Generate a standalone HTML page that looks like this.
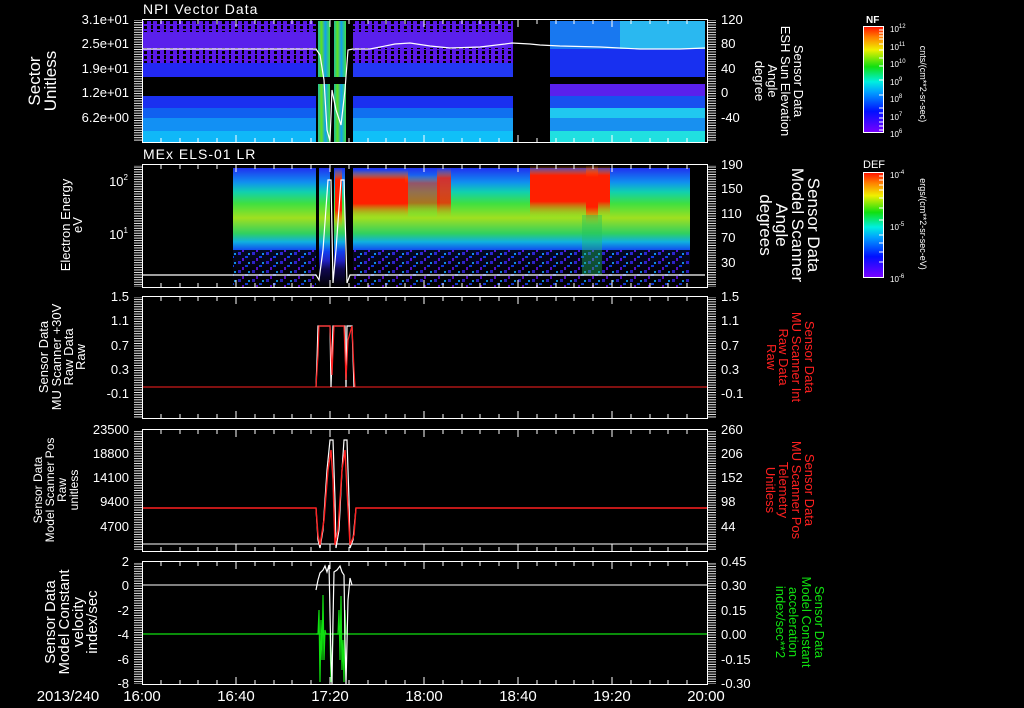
<!DOCTYPE html>
<html><head><meta charset="utf-8"><style>
html,body{margin:0;padding:0;background:#000;width:1024px;height:708px;overflow:hidden}
svg{display:block}
text{font-family:"Liberation Sans",sans-serif;fill:#fff}
</style></head><body>
<svg width="1024" height="708" viewBox="0 0 1024 708" xmlns="http://www.w3.org/2000/svg">
<defs>
<linearGradient id="rb" x1="0" y1="1" x2="0" y2="0">
<stop offset="0" stop-color="#7a00ff"/><stop offset="0.2" stop-color="#0010ff"/><stop offset="0.38" stop-color="#00a0ff"/><stop offset="0.48" stop-color="#00f0e0"/><stop offset="0.62" stop-color="#10e010"/><stop offset="0.78" stop-color="#f0f000"/><stop offset="0.9" stop-color="#ff8000"/><stop offset="1" stop-color="#ff1000"/>
</linearGradient>
<linearGradient id="sp2" x1="0" y1="0" x2="0" y2="1">
<stop offset="0" stop-color="#2030f0"/><stop offset="0.12" stop-color="#1090f0"/><stop offset="0.2" stop-color="#10d0b0"/><stop offset="0.3" stop-color="#40e040"/><stop offset="0.42" stop-color="#a0e020"/><stop offset="0.55" stop-color="#30d060"/><stop offset="0.62" stop-color="#10b0e0"/><stop offset="0.7" stop-color="#1040f0"/><stop offset="0.78" stop-color="#2020c0"/><stop offset="0.85" stop-color="#100850"/><stop offset="1" stop-color="#000"/>
</linearGradient>
<linearGradient id="red1" x1="0" y1="0" x2="0" y2="1">
<stop offset="0" stop-color="#ff8000" stop-opacity="0"/><stop offset="0.2" stop-color="#ff2000"/><stop offset="0.7" stop-color="#ff2000"/><stop offset="1" stop-color="#f0c000" stop-opacity="0"/>
</linearGradient>
<linearGradient id="stripe" x1="0" y1="0" x2="1" y2="0">
<stop offset="0" stop-color="#20c0a0"/><stop offset="0.3" stop-color="#60e020"/><stop offset="0.6" stop-color="#10a0f0"/><stop offset="1" stop-color="#40e040"/>
</linearGradient>
<pattern id="noise" width="14" height="9" patternUnits="userSpaceOnUse">
<rect width="14" height="9" fill="#000"/><rect x="0" y="0" width="3" height="3" fill="#3020d0"/><rect x="7" y="4" width="3" height="2" fill="#1040f0"/><rect x="4" y="6" width="2" height="3" fill="#6010e0"/><rect x="10" y="1" width="2" height="2" fill="#10a0f0"/>
</pattern>
<pattern id="speck" width="13" height="5" patternUnits="userSpaceOnUse">
<rect width="13" height="5" fill="#5a18e8"/><rect x="1" y="1" width="3" height="3" fill="#000"/><rect x="8" y="0" width="2" height="4" fill="#000"/>
</pattern>
<pattern id="vcomb" width="4" height="2.45" patternUnits="userSpaceOnUse"><rect width="4" height="0.9" fill="#fff"/></pattern>
</defs>

<!-- ===== Panel 1 ===== -->
<g>
<rect x="142" y="21" width="174" height="11" fill="url(#speck)"/>
<rect x="142" y="32" width="174" height="16" fill="#5a20ec"/>
<rect x="142" y="48" width="174" height="15" fill="url(#speck)"/>
<rect x="142" y="63" width="174" height="14" fill="#2228f2"/>
<rect x="142" y="96" width="174" height="12" fill="#1a30f0"/>
<rect x="142" y="108" width="174" height="10" fill="#1060f0"/>
<rect x="142" y="118" width="174" height="13" fill="#1290f4"/>
<rect x="142" y="131" width="174" height="11" fill="#10b8f8"/>

<rect x="353" y="21" width="160" height="11" fill="url(#speck)"/>
<rect x="353" y="32" width="160" height="16" fill="#5a20ec"/>
<rect x="353" y="48" width="160" height="15" fill="url(#speck)"/>
<rect x="353" y="63" width="160" height="14" fill="#2238f2"/>
<rect x="353" y="96" width="160" height="12" fill="#1a30f0"/>
<rect x="353" y="108" width="160" height="10" fill="#1070f0"/>
<rect x="353" y="118" width="160" height="13" fill="#18a0f4"/>
<rect x="353" y="131" width="160" height="11" fill="#10c0f8"/>

<rect x="550" y="21" width="155" height="28" fill="#1878f0"/>
<rect x="620" y="21" width="85" height="28" fill="#30c8f0" opacity="0.8"/>
<rect x="550" y="49" width="155" height="28" fill="#1830f0"/>
<rect x="550" y="84" width="155" height="12" fill="#5a20ec"/>
<rect x="550" y="96" width="155" height="12" fill="#1850f0"/>
<rect x="550" y="108" width="155" height="10" fill="#20c8f0"/>
<rect x="550" y="118" width="155" height="13" fill="#1890f0"/>
<rect x="550" y="131" width="155" height="11" fill="#20e0e0"/>

<rect x="318" y="21" width="12" height="56" fill="url(#stripe)"/>
<rect x="334" y="21" width="12" height="56" fill="url(#stripe)"/>
<rect x="318" y="84" width="12" height="58" fill="url(#stripe)"/>
<rect x="334" y="84" width="12" height="58" fill="url(#stripe)"/>
<polyline fill="none" stroke="#fff" stroke-width="1.2" points="142,49 316,49 320,55 324,80 327,130 330,141 332,90 336,110 341,125 345,90 348,50 353,49 370,49 395,44 410,43 430,46 450,48 480,47 505,44 512,43 530,44 540,45 560,46 600,47 640,49 680,49 705,48"/>
</g>

<!-- ===== Panel 2 ===== -->
<g>
<rect x="233" y="168" width="83" height="119" fill="url(#sp2)"/>
<rect x="353" y="168" width="337" height="119" fill="url(#sp2)"/>
<rect x="233" y="250" width="83" height="37" fill="url(#noise)" opacity="0.85"/>
<rect x="353" y="250" width="337" height="37" fill="url(#noise)" opacity="0.85"/>
<rect x="319" y="168" width="11" height="119" fill="url(#sp2)"/>
<rect x="334" y="168" width="11" height="119" fill="url(#sp2)"/>
<rect x="335" y="168" width="7" height="60" fill="url(#red1)"/>
<rect x="353" y="170" width="55" height="48" fill="url(#red1)"/>
<rect x="405" y="175" width="35" height="40" fill="url(#red1)" opacity="0.55"/>
<rect x="437" y="168" width="14" height="50" fill="url(#red1)" opacity="0.8"/>
<rect x="530" y="165" width="80" height="52" fill="url(#red1)"/>
<rect x="586" y="165" width="12" height="60" fill="url(#red1)"/>
<rect x="582" y="215" width="20" height="60" fill="#20c060" opacity="0.4"/>
<polyline fill="none" stroke="#fff" stroke-width="1.2" points="142,275 316,275 319,280 323,250 328,180 331,180 333,283 336,250 341,180 344,180 347,283 350,275 705,275"/>
</g>

<!-- ===== Panel 3 ===== -->
<line x1="142" y1="387" x2="708" y2="387" stroke="#ff2020" stroke-width="1"/>
<polyline fill="none" stroke="#fff" stroke-width="1.2" points="316,387 317,360 318,326 330,326 331,387 333,326 345,326 346,387 347,326 352,326 354,387"/>
<polyline fill="none" stroke="#ff2020" stroke-width="1.2" points="316,387 318,355 319,326 330,326 332,375 334,326 344,326 346,380 348,340 352,326 354,370 355,387"/>

<!-- ===== Panel 4 ===== -->
<line x1="142" y1="544" x2="708" y2="544" stroke="#fff" stroke-width="1"/>
<polyline fill="none" stroke="#fff" stroke-width="1.2" points="316,508 318,540 320,548 323,530 327,470 330,440 333,440 335,500 336,548 339,530 342,470 344,440 347,440 349,500 350,548 353,540 356,508"/>
<polyline fill="none" stroke="#ff2020" stroke-width="1.4" points="142,508 316,508 318,535 320,545 324,520 328,470 331,450 333,480 335,545 338,530 342,470 345,450 347,490 350,545 354,535 356,508 708,508"/>

<!-- ===== Panel 5 ===== -->
<line x1="142" y1="585" x2="708" y2="585" stroke="#fff" stroke-width="1"/>
<line x1="142" y1="634" x2="708" y2="634" stroke="#10e010" stroke-width="1.2"/>
<polyline fill="none" stroke="#10e010" stroke-width="1.2" points="316,634 318,634 319,610 320,682 321,620 322,660 323,595 324,660 325,630 326,634 330,634 331,682 333,634 338,634 339,610 340,660 341,596 342,670 343,640 344,682 345,610 346,634 350,634"/>
<polyline fill="none" stroke="#fff" stroke-width="1.2" points="316,590 318,580 320,573 323,570 325,566 327,572 329,565 331,660 332,684 333,620 334,572 337,570 340,566 342,572 344,575 345,640 346,684 348,600 350,578 352,585"/>

<!-- ===== Axes frames, ticks ===== -->
<g stroke="#fff" stroke-width="1" fill="none">
<rect x="142.5" y="19.5" width="565" height="123"/>
<rect x="142.5" y="164.5" width="565" height="123"/>
<rect x="142.5" y="296.5" width="565" height="122"/>
<rect x="142.5" y="429.5" width="565" height="122"/>
<rect x="142.5" y="561.5" width="565" height="123"/>
</g>
<g>
<rect x="134" y="20" width="8" height="122" fill="url(#vcomb)"/>
<rect x="708" y="20" width="8" height="122" fill="url(#vcomb)"/>
<rect x="134" y="165" width="8" height="122" fill="url(#vcomb)"/>
<rect x="708" y="165" width="8" height="122" fill="url(#vcomb)"/>
<rect x="134" y="297" width="8" height="121" fill="url(#vcomb)"/>
<rect x="708" y="297" width="8" height="121" fill="url(#vcomb)"/>
<rect x="134" y="430" width="8" height="121" fill="url(#vcomb)"/>
<rect x="708" y="430" width="8" height="121" fill="url(#vcomb)"/>
<rect x="134" y="562" width="8" height="122" fill="url(#vcomb)"/>
<rect x="708" y="562" width="8" height="122" fill="url(#vcomb)"/>
</g>
<g stroke="#fff" stroke-width="1">
<path d="M161 20v4M180 20v4M198 20v4M217 20v4M236 20v7M255 20v4M274 20v4M292 20v4M311 20v4M330 20v7M349 20v4M368 20v4M386 20v4M405 20v4M424 20v7M443 20v4M462 20v4M480 20v4M499 20v4M518 20v7M537 20v4M556 20v4M574 20v4M593 20v4M612 20v7M631 20v4M650 20v4M668 20v4M687 20v4"/>
<path d="M161 142v-4M180 142v-4M198 142v-4M217 142v-4M236 142v-7M255 142v-4M274 142v-4M292 142v-4M311 142v-4M330 142v-7M349 142v-4M368 142v-4M386 142v-4M405 142v-4M424 142v-7M443 142v-4M462 142v-4M480 142v-4M499 142v-4M518 142v-7M537 142v-4M556 142v-4M574 142v-4M593 142v-4M612 142v-7M631 142v-4M650 142v-4M668 142v-4M687 142v-4"/>
<g transform="translate(0,145)"><path d="M161 20v4M180 20v4M198 20v4M217 20v4M236 20v7M255 20v4M274 20v4M292 20v4M311 20v4M330 20v7M349 20v4M368 20v4M386 20v4M405 20v4M424 20v7M443 20v4M462 20v4M480 20v4M499 20v4M518 20v7M537 20v4M556 20v4M574 20v4M593 20v4M612 20v7M631 20v4M650 20v4M668 20v4M687 20v4"/>
<path d="M161 142v-4M180 142v-4M198 142v-4M217 142v-4M236 142v-7M255 142v-4M274 142v-4M292 142v-4M311 142v-4M330 142v-7M349 142v-4M368 142v-4M386 142v-4M405 142v-4M424 142v-7M443 142v-4M462 142v-4M480 142v-4M499 142v-4M518 142v-7M537 142v-4M556 142v-4M574 142v-4M593 142v-4M612 142v-7M631 142v-4M650 142v-4M668 142v-4M687 142v-4"/></g>
<g transform="translate(0,277)"><path d="M161 20v4M180 20v4M198 20v4M217 20v4M236 20v7M255 20v4M274 20v4M292 20v4M311 20v4M330 20v7M349 20v4M368 20v4M386 20v4M405 20v4M424 20v7M443 20v4M462 20v4M480 20v4M499 20v4M518 20v7M537 20v4M556 20v4M574 20v4M593 20v4M612 20v7M631 20v4M650 20v4M668 20v4M687 20v4"/>
<path d="M161 141v-4M180 141v-4M198 141v-4M217 141v-4M236 141v-7M255 141v-4M274 141v-4M292 141v-4M311 141v-4M330 141v-7M349 141v-4M368 141v-4M386 141v-4M405 141v-4M424 141v-7M443 141v-4M462 141v-4M480 141v-4M499 141v-4M518 141v-7M537 141v-4M556 141v-4M574 141v-4M593 141v-4M612 141v-7M631 141v-4M650 141v-4M668 141v-4M687 141v-4"/></g>
<g transform="translate(0,410)"><path d="M161 20v4M180 20v4M198 20v4M217 20v4M236 20v7M255 20v4M274 20v4M292 20v4M311 20v4M330 20v7M349 20v4M368 20v4M386 20v4M405 20v4M424 20v7M443 20v4M462 20v4M480 20v4M499 20v4M518 20v7M537 20v4M556 20v4M574 20v4M593 20v4M612 20v7M631 20v4M650 20v4M668 20v4M687 20v4"/>
<path d="M161 141v-4M180 141v-4M198 141v-4M217 141v-4M236 141v-7M255 141v-4M274 141v-4M292 141v-4M311 141v-4M330 141v-7M349 141v-4M368 141v-4M386 141v-4M405 141v-4M424 141v-7M443 141v-4M462 141v-4M480 141v-4M499 141v-4M518 141v-7M537 141v-4M556 141v-4M574 141v-4M593 141v-4M612 141v-7M631 141v-4M650 141v-4M668 141v-4M687 141v-4"/></g>
<g transform="translate(0,542)"><path d="M161 20v4M180 20v4M198 20v4M217 20v4M236 20v7M255 20v4M274 20v4M292 20v4M311 20v4M330 20v7M349 20v4M368 20v4M386 20v4M405 20v4M424 20v7M443 20v4M462 20v4M480 20v4M499 20v4M518 20v7M537 20v4M556 20v4M574 20v4M593 20v4M612 20v7M631 20v4M650 20v4M668 20v4M687 20v4"/>
<path d="M161 142v-4M180 142v-4M198 142v-4M217 142v-4M236 142v-7M255 142v-4M274 142v-4M292 142v-4M311 142v-4M330 142v-7M349 142v-4M368 142v-4M386 142v-4M405 142v-4M424 142v-7M443 142v-4M462 142v-4M480 142v-4M499 142v-4M518 142v-7M537 142v-4M556 142v-4M574 142v-4M593 142v-4M612 142v-7M631 142v-4M650 142v-4M668 142v-4M687 142v-4"/></g>
</g>

<text x="143" y="14" font-size="14" letter-spacing="1">NPI Vector Data</text>
<text x="143" y="159" font-size="14" letter-spacing="1">MEx ELS-01 LR</text>

<g font-size="13" text-anchor="end">
<text x="129" y="24">3.1e+01</text><text x="129" y="48">2.5e+01</text><text x="129" y="73">1.9e+01</text><text x="129" y="97">1.2e+01</text><text x="129" y="122">6.2e+00</text>
<text x="128" y="186">10<tspan font-size="8" dy="-6">2</tspan></text><text x="128" y="239">10<tspan font-size="8" dy="-6">1</tspan></text>
<text x="129" y="301">1.5</text><text x="129" y="325">1.1</text><text x="129" y="350">0.7</text><text x="129" y="374">0.3</text><text x="129" y="398">-0.1</text>
<text x="129" y="434">23500</text><text x="129" y="458">18800</text><text x="129" y="482">14100</text><text x="129" y="506">9400</text><text x="129" y="531">4700</text>
<text x="129" y="566">2</text><text x="129" y="590">0</text><text x="129" y="615">-2</text><text x="129" y="639">-4</text><text x="129" y="664">-6</text><text x="129" y="688">-8</text>
</g>
<g font-size="13">
<text x="721" y="24">120</text><text x="721" y="48">80</text><text x="721" y="73">40</text><text x="721" y="97">0</text><text x="721" y="122">-40</text>
<text x="721" y="169">190</text><text x="721" y="193">150</text><text x="721" y="218">110</text><text x="721" y="242">70</text><text x="721" y="267">30</text>
<text x="721" y="301">1.5</text><text x="721" y="325">1.1</text><text x="721" y="350">0.7</text><text x="721" y="374">0.3</text><text x="721" y="398">-0.1</text>
<text x="721" y="434">260</text><text x="721" y="458">206</text><text x="721" y="482">152</text><text x="721" y="506">98</text><text x="721" y="531">44</text>
<text x="721" y="566">0.45</text><text x="721" y="590">0.30</text><text x="721" y="615">0.15</text><text x="721" y="639">0.00</text><text x="721" y="664">-0.15</text><text x="721" y="688">-0.30</text>
</g>
<g font-size="15" text-anchor="middle">
<text x="68" y="701">2013/240</text>
<text x="142" y="701">16:00</text><text x="236" y="701">16:40</text><text x="330" y="701">17:20</text><text x="424" y="701">18:00</text><text x="518" y="701">18:40</text><text x="612" y="701">19:20</text><text x="706" y="701">20:00</text>
</g>

<g text-anchor="middle">
<text transform="translate(40,81) rotate(-90)" font-size="17">Sector</text>
<text transform="translate(56,81) rotate(-90)" font-size="17">Unitless</text>
<text transform="translate(70,225) rotate(-90)" font-size="13">Electron Energy</text>
<text transform="translate(82,225) rotate(-90)" font-size="13">eV</text>
<text transform="translate(48,357) rotate(-90)" font-size="13">Sensor Data</text>
<text transform="translate(61,357) rotate(-90)" font-size="13">MU Scanner +30V</text>
<text transform="translate(73,357) rotate(-90)" font-size="13">Raw Data</text>
<text transform="translate(85,357) rotate(-90)" font-size="13">Raw</text>
<text transform="translate(42,490) rotate(-90)" font-size="12">Sensor Data</text>
<text transform="translate(54,490) rotate(-90)" font-size="12">Model Scanner Pos</text>
<text transform="translate(66,490) rotate(-90)" font-size="12">Raw</text>
<text transform="translate(78,490) rotate(-90)" font-size="12">unitless</text>
<text transform="translate(55,622) rotate(-90)" font-size="15">Sensor Data</text>
<text transform="translate(69,622) rotate(-90)" font-size="15">Model Constant</text>
<text transform="translate(83,622) rotate(-90)" font-size="15">velocity</text>
<text transform="translate(97,622) rotate(-90)" font-size="15">index/sec</text>
</g>
<g text-anchor="middle">
<text transform="translate(794,81) rotate(90)" font-size="13">Sensor Data</text>
<text transform="translate(781,81) rotate(90)" font-size="13">ESH Sun Elevation</text>
<text transform="translate(768,81) rotate(90)" font-size="13">Angle</text>
<text transform="translate(755,81) rotate(90)" font-size="13">degree</text>
<text transform="translate(808,225) rotate(90)" font-size="17">Sensor Data</text>
<text transform="translate(792,225) rotate(90)" font-size="17">Model Scanner</text>
<text transform="translate(776,225) rotate(90)" font-size="17">Angle</text>
<text transform="translate(760,225) rotate(90)" font-size="17">degrees</text>
<text transform="translate(805,357) rotate(90)" font-size="13" style="fill:#ff2020">Sensor Data</text>
<text transform="translate(792,357) rotate(90)" font-size="13" style="fill:#ff2020">MU Scanner Int</text>
<text transform="translate(779,357) rotate(90)" font-size="13" style="fill:#ff2020">Raw Data</text>
<text transform="translate(767,357) rotate(90)" font-size="13" style="fill:#ff2020">Raw</text>
<text transform="translate(805,490) rotate(90)" font-size="13" style="fill:#ff2020">Sensor Data</text>
<text transform="translate(792,490) rotate(90)" font-size="13" style="fill:#ff2020">MU Scanner Pos</text>
<text transform="translate(779,490) rotate(90)" font-size="13" style="fill:#ff2020">Telemetry</text>
<text transform="translate(766,490) rotate(90)" font-size="13" style="fill:#ff2020">Unitless</text>
<text transform="translate(815,622) rotate(90)" font-size="13" style="fill:#10e010">Sensor Data</text>
<text transform="translate(802,622) rotate(90)" font-size="13" style="fill:#10e010">Model Constant</text>
<text transform="translate(789,622) rotate(90)" font-size="13" style="fill:#10e010">acceleration</text>
<text transform="translate(776,622) rotate(90)" font-size="13" style="fill:#10e010">index/sec**2</text>
</g>

<rect x="863.5" y="26.5" width="20" height="106" fill="url(#rb)" stroke="#fff"/>
<rect x="863.5" y="172.5" width="20" height="105" fill="url(#rb)" stroke="#fff"/>
<g stroke="#fff" stroke-width="1">
<path d="M879 30h4M879 33h4M879 36h4M879 39h4M879 44h4M879 50h4M879 58h4M879 66h4M879 80h4M879 95h4M879 108h4M879 113h4M879 118h4M879 122h4M879 126h4M879 130h4"/>
<path d="M879 176h4M879 180h4M879 185h4M879 190h4M879 198h4M879 208h4M879 220h4M879 235h4M879 243h4M879 252h4M879 262h4"/>
</g>
<text x="866" y="23" font-size="10" font-weight="bold">NF</text>
<text x="863" y="168" font-size="11">DEF</text>
<g font-size="8">
<text x="890" y="32">10<tspan font-size="6" dy="-4">12</tspan></text>
<text x="890" y="50">10<tspan font-size="6" dy="-4">11</tspan></text>
<text x="890" y="67">10<tspan font-size="6" dy="-4">10</tspan></text>
<text x="890" y="85">10<tspan font-size="6" dy="-4">9</tspan></text>
<text x="890" y="102">10<tspan font-size="6" dy="-4">8</tspan></text>
<text x="890" y="120">10<tspan font-size="6" dy="-4">7</tspan></text>
<text x="890" y="137">10<tspan font-size="6" dy="-4">6</tspan></text>
<text x="890" y="178">10<tspan font-size="6" dy="-4">-4</tspan></text>
<text x="890" y="230">10<tspan font-size="6" dy="-4">-5</tspan></text>
<text x="890" y="282">10<tspan font-size="6" dy="-4">-6</tspan></text>
</g>
<text transform="translate(920,84) rotate(90)" font-size="9" text-anchor="middle">cnts/(cm**2-sr-sec)</text>
<text transform="translate(920,224) rotate(90)" font-size="9" text-anchor="middle">ergs/(cm**2-sr-sec-eV)</text>
</svg>
</body></html>
